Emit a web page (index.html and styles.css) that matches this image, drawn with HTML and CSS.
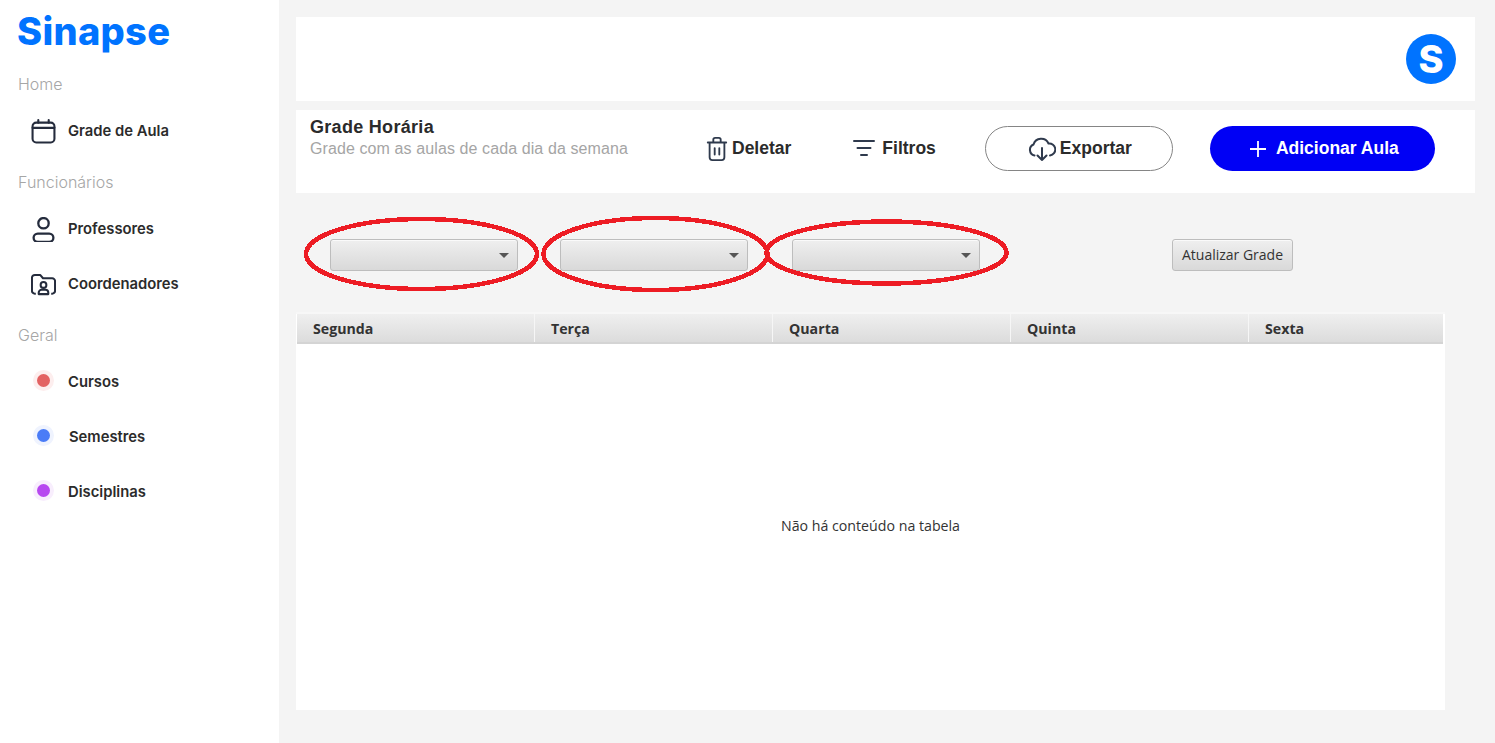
FILE: index.html
```html
<!DOCTYPE html>
<html lang="pt-BR">

<head>
    <meta charset="UTF-8">
    <meta name="viewport" content="width=device-width, initial-scale=1.0">
    <title>Sinapse</title>
    <link rel="stylesheet" href="styles.css">
</head>

<body>
    <aside class="sidebar">
        <div class="logo">Sinapse</div>

        <div class="nav-title nav-title-home">Home</div>
        <a class="nav-item nav-item-first">
            <svg class="nav-icon" viewBox="0 0 24 24" fill="none" stroke="#252c3d" stroke-width="2" stroke-linecap="round">
                <rect x="1.5" y="3.5" width="21" height="19" rx="3.5"/>
                <path d="M1.5 8.5h21M7 1v2.5M17 1v2.5"/>
            </svg>
            <span>Grade de Aula</span>
        </a>

        <div class="nav-title">Funcionários</div>
        <a class="nav-item nav-item-first">
            <svg class="nav-icon" viewBox="0 0 24 24" fill="none" stroke="#252c3d" stroke-width="2.2">
                <circle cx="12" cy="6" r="5"/>
                <rect x="2.5" y="16" width="19" height="8" rx="4"/>
            </svg>
            <span>Professores</span>
        </a>
        <a class="nav-item">
            <svg class="nav-icon" viewBox="0 0 26 24" fill="none" stroke="#252c3d" stroke-width="2.1" stroke-linejoin="round">
                <path d="M5 21.5H4a3 3 0 0 1-3-3V5a3 3 0 0 1 3-3h5.5l3 3.5H22a3 3 0 0 1 3 3v10a3 3 0 0 1-3 3h-1"/>
                <circle cx="13" cy="12.5" r="3"/>
                <path d="M8 22v-1.5a3 3 0 0 1 3-3h4a3 3 0 0 1 3 3V22z"/>
            </svg>
            <span>Coordenadores</span>
        </a>

        <div class="nav-title">Geral</div>
        <a class="nav-item nav-item-first">
            <span class="dot dot-red"></span>
            <span>Cursos</span>
        </a>
        <a class="nav-item">
            <span class="dot dot-blue"></span>
            <span class="nudge">Semestres</span>
        </a>
        <a class="nav-item">
            <span class="dot dot-purple"></span>
            <span>Disciplinas</span>
        </a>
    </aside>

    <main class="content">
        <header class="topbar">
            <div class="avatar">S</div>
        </header>

        <section class="page-head">
            <div class="page-title">
                <h1>Grade Horária</h1>
                <p>Grade com as aulas de cada dia da semana</p>
            </div>
            <button class="plain-btn btn-delete">
                <svg class="trash-icon" width="22" height="24" viewBox="0 0 22 26" fill="none" stroke="#2f3a4d" stroke-width="2" stroke-linecap="round" stroke-linejoin="round">
                    <path d="M1 6h20M7 6V3a2 2 0 0 1 2-2h4a2 2 0 0 1 2 2v3M3 6v16a3 3 0 0 0 3 3h10a3 3 0 0 0 3-3V6M8.500 12v7M13.500 12v7"/>
                </svg>
                Deletar
            </button>
            <button class="plain-btn btn-filter">
                <svg width="22" height="18" viewBox="0 0 22 18" fill="none" stroke="#2f3a4d" stroke-width="2" stroke-linecap="round">
                    <path d="M1 2h20M4.500 9h13M8 16h6"/>
                </svg>
                Filtros
            </button>
            <button class="export-btn">
                <svg width="28" height="26" viewBox="0 0 28 26" fill="none" stroke="#2f3a4d" stroke-width="2" stroke-linecap="round" stroke-linejoin="round">
                    <path d="M6.500 19.500A5.800 5.800 0 0 1 5.500 8.500 8 8 0 0 1 20.500 7.500 6 6 0 0 1 22 19.500M14 12v12M9.500 19.500 14 24l4.500-4.500"/>
                </svg>
                Exportar
            </button>
            <button class="add-btn">
                <svg width="16" height="16" viewBox="0 0 16 16" fill="none" stroke="#fff" stroke-width="1.8">
                    <path d="M8 0v16M0 8h16"/>
                </svg>
                Adicionar Aula
            </button>
        </section>

        <section class="filters">
            <div class="combo combo-1"><i class="arrow"></i></div>
            <div class="combo combo-2"><i class="arrow"></i></div>
            <div class="combo combo-3"><i class="arrow"></i></div>
            <button class="refresh-btn">Atualizar Grade</button>
        </section>

        <section class="grid-table">
            <div class="grid-head">
                <div class="grid-col">Segunda</div>
                <div class="grid-col">Terça</div>
                <div class="grid-col">Quarta</div>
                <div class="grid-col">Quinta</div>
                <div class="grid-col grid-col-last">Sexta</div>
            </div>
            <div class="grid-empty">Não há conteúdo na tabela</div>
        </section>
    </main>

    <!-- marcacoes em vermelho por cima da tela -->
    <svg class="marks" width="1495" height="743" viewBox="0 0 1495 743" fill="none" stroke="#ed1c24" stroke-width="4.5" shape-rendering="crispEdges">
        <ellipse cx="421.500" cy="254" rx="115.500" ry="35"/>
        <ellipse cx="655.500" cy="254" rx="112" ry="36"/>
        <ellipse cx="886.500" cy="252.500" rx="120" ry="31"/>
    </svg>
</body>

</html>
```

FILE: styles.css
```css
html,
body {
    height: 100%;
}

body {
    font-family: 'Inter', sans-serif;
    background-color: #f4f4f4;
    margin: 0;
    display: flex;
    height: 743px;
    overflow: hidden;
    color: #2b2b2b;
}

.sidebar {
    width: 279px;
    flex-shrink: 0;
    background-color: #fff;
    box-sizing: border-box;
    padding: 7px 0 0 18px;
}

.logo {
    font-family: 'Inter', sans-serif;
    font-weight: 800;
    font-size: 38px;
    line-height: 48px;
    letter-spacing: 0.3px;
    color: #0073ff;
    margin-left: -1px;
}

.nav-title {
    font-size: 16px;
    font-weight: 300;
    line-height: 20px;
    color: #a6a6a6;
    margin-top: 26px;
}

.nav-title-home {
    margin-top: 19px;
}

.nav-item {
    display: flex;
    align-items: center;
    height: 30px;
    margin-top: 25px;
    padding-left: 13px;
    font-size: 14.8px;
    font-weight: 600;
    color: #2b2b2b;
}

.nav-item-first {
    margin-top: 22px;
}

.nav-icon {
    width: 25px;
    height: 25px;
    margin-right: 12px;
    flex-shrink: 0;
}

.dot {
    width: 13px;
    height: 13px;
    border-radius: 50%;
    margin: -3px 18px 0 6px;
    flex-shrink: 0;
}

.dot-red {
    background-color: #e36262;
    box-shadow: 0 0 0 4px #fdeeee;
}

.dot-blue {
    background-color: #4a7cf7;
    box-shadow: 0 0 0 4px #eff3fe;
}

.dot-purple {
    background-color: #b748f0;
    box-shadow: 0 0 0 4px #f8eefd;
}

.nudge {
    margin-left: 1px;
}

.content {
    flex: 1;
    min-width: 0;
    padding: 17px 20px 0 17px;
}

.topbar {
    height: 84px;
    background-color: #fff;
    display: flex;
    align-items: center;
    justify-content: flex-end;
    padding-right: 19px;
}

.avatar {
    width: 50px;
    height: 50px;
    border-radius: 50%;
    background-color: #0073ff;
    color: #fff;
    font-weight: 800;
    font-size: 38px;
    line-height: 50px;
    text-align: center;
}

.page-head {
    height: 83px;
    margin-top: 9px;
    background-color: #fff;
    display: flex;
    align-items: flex-start;
    font-family: 'Liberation Sans', Arial, sans-serif;
}

.page-title {
    width: 392px;
    padding: 8px 0 0 14px;
    box-sizing: border-box;
}

.page-title h1 {
    margin: 0;
    font-size: 18px;
    line-height: 19px;
    font-weight: 700;
    letter-spacing: 0.3px;
    color: #2b2b2b;
}

.page-title p {
    margin: 3px 0 0;
    font-size: 16px;
    line-height: 18px;
    letter-spacing: 0.1px;
    color: #a5a5a5;
}

.plain-btn,
.export-btn,
.add-btn {
    font-family: 'Liberation Sans', Arial, sans-serif;
    font-weight: 700;
    font-size: 17.5px;
    display: flex;
    align-items: center;
    padding: 0;
    border: none;
    background: none;
    color: #2b2b2b;
}

.plain-btn {
    height: 44px;
    margin-top: 16px;
}

.btn-delete {
    margin-left: 18px;
    gap: 4px;
}

.trash-icon {
    margin-top: 2px;
}

.btn-filter {
    margin-left: 62px;
    gap: 7px;
}

.export-btn {
    width: 188px;
    height: 45px;
    margin: 16px 0 0 49px;
    padding-left: 2px;
    border: 1px solid #858585;
    border-radius: 23px;
    box-sizing: border-box;
    background-color: #fff;
    justify-content: center;
    gap: 4px;
}

.add-btn {
    width: 225px;
    height: 45px;
    margin: 16px 0 0 37px;
    padding-left: 4px;
    box-sizing: border-box;
    border-radius: 23px;
    background-color: #0000f5;
    color: #fff;
    justify-content: center;
    gap: 10px;
}

.filters {
    display: flex;
    align-items: flex-start;
    height: 32px;
    margin-top: 46px;
    padding-left: 34px;
}

.combo,
.refresh-btn {
    box-sizing: border-box;
    height: 32px;
    border: 1px solid #bdbdbd;
    border-radius: 3px;
    background: linear-gradient(#efefef, #d9d9d9);
    box-shadow: inset 0 1px 0 #fafafa;
}

.combo {
    width: 188px;
    display: flex;
    align-items: center;
    justify-content: flex-end;
    padding: 0 8px 0 0;
}

.combo-2 {
    margin-left: 42px;
}

.combo-3 {
    margin-left: 44px;
}

.arrow {
    width: 0;
    height: 0;
    margin-top: 1px;
    border-left: 5px solid transparent;
    border-right: 5px solid transparent;
    border-top: 5px solid #555;
}

.refresh-btn {
    width: 121px;
    margin-left: 192px;
    padding: 0 0 2px;
    font-family: 'Open Sans', sans-serif;
    font-size: 14px;
    color: #333;
}

.grid-table {
    width: 1149px;
    height: 398px;
    margin-top: 41px;
    background-color: #fff;
    padding-top: 2px;
    box-sizing: border-box;
    font-family: 'Open Sans', sans-serif;
    display: flex;
    flex-direction: column;
    background-image: linear-gradient(#f7f7f7, #f7f7f7);
    background-size: 100% 2px;
    background-repeat: no-repeat;
}

.grid-head {
    display: flex;
    width: 1146px;
    height: 30px;
    margin-left: 1px;
    flex-shrink: 0;
    background: linear-gradient(#efefef, #dcdcdc);
    border-bottom: 2px solid #d4d4d4;
    box-sizing: border-box;
}

.grid-col {
    width: 238px;
    box-sizing: border-box;
    padding-left: 16px;
    font-size: 14.2px;
    font-weight: 700;
    line-height: 29px;
    color: #333;
    border-right: 1px solid #f6f6f6;
}

.grid-col-last {
    width: 194px;
    border-right: none;
}

.grid-empty {
    flex: 1;
    display: flex;
    align-items: center;
    justify-content: center;
    font-size: 14.2px;
    color: #333;
    padding-bottom: 3px;
}

.marks {
    position: absolute;
    top: 0;
    left: 0;
    pointer-events: none;
}
```
